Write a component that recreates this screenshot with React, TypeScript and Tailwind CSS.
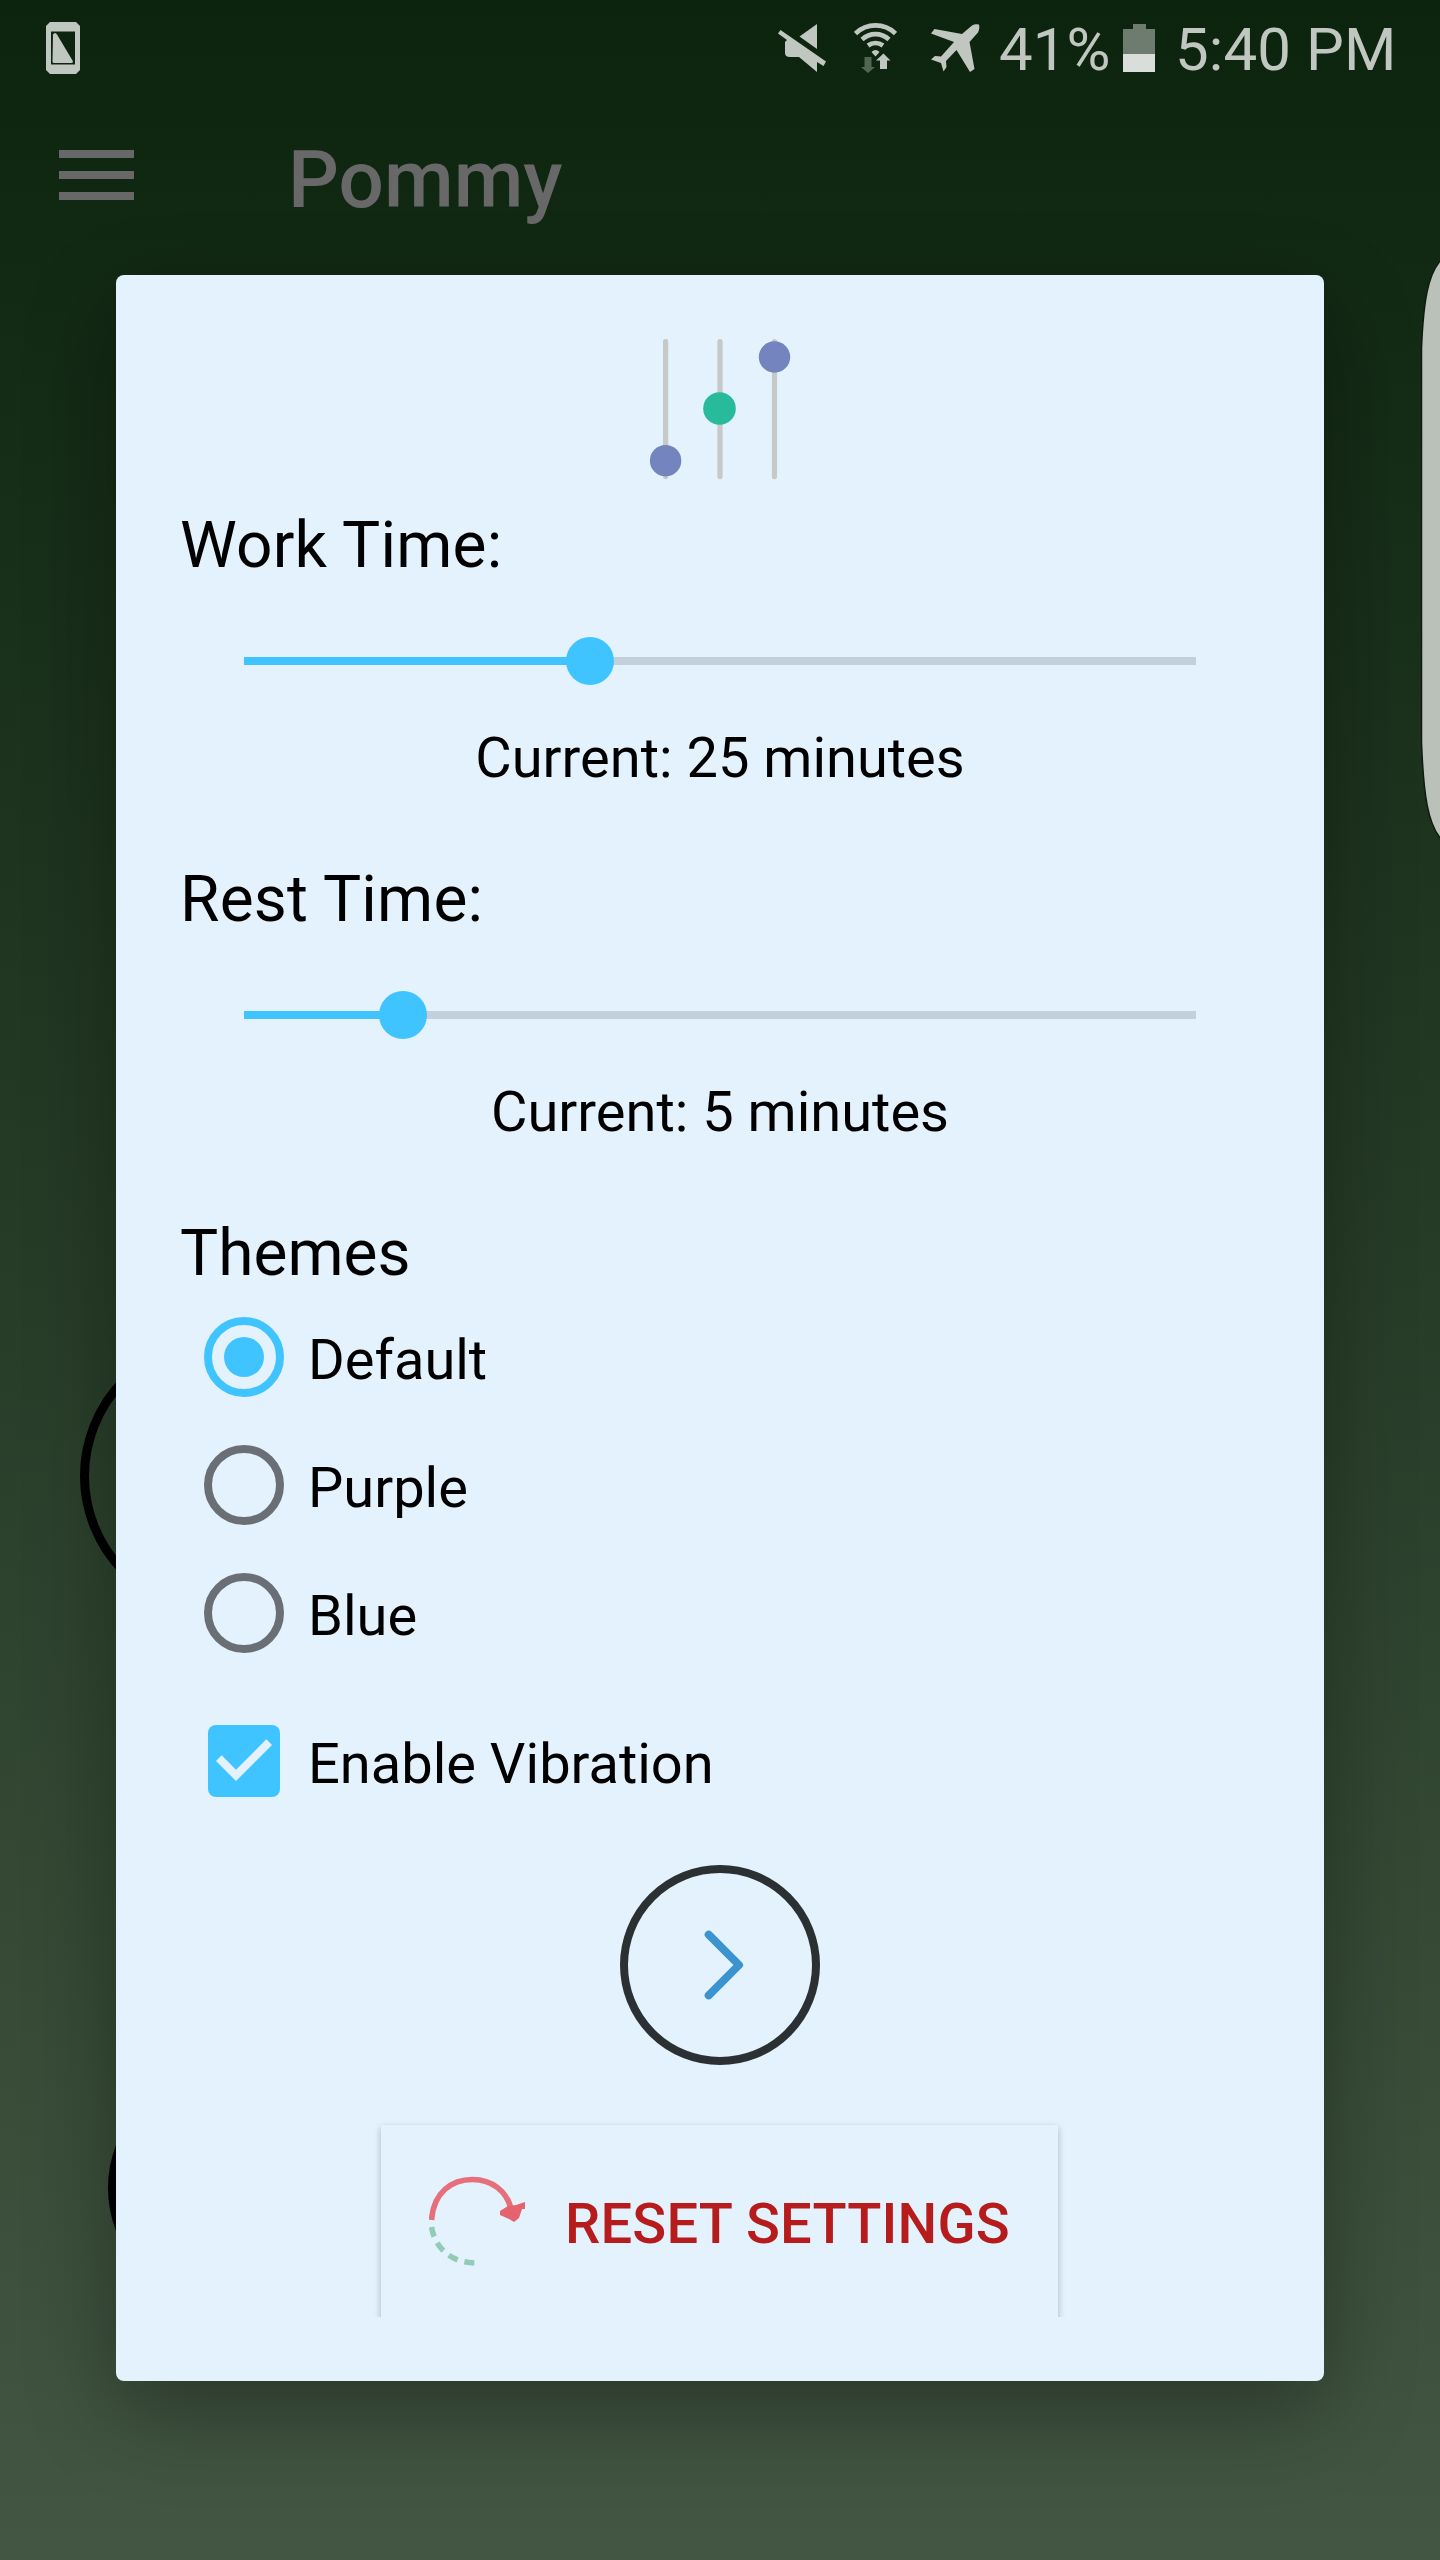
import React from "react";

const themes = ["Default", "Purple", "Blue"];

function StatusBar() {
  return (
    <div className="flex h-24 items-start text-[60px] leading-[70px] text-[#c0c7c0]">
      <svg className="ml-[46px] mt-[22px] h-[52px] w-[34px]" viewBox="0 0 34 52" fill="#c0c7c0">
        <path fillRule="evenodd" d="M4 0h26l4 4v44l-4 4H4l-4-4V4zM5 9.500v33h24v-33z" />
        <path d="M7 12.500q2-3 4 0l15.500 26q1 2.500-1 2.500H8q-1.500 0-1.500-1.500z" />
      </svg>
      <svg className="ml-[698px] mt-6 h-[48px] w-[48px]" viewBox="0 0 48 48" fill="#c0c7c0">
        <path d="M2.500 6 48 37.500l-2.500 4.500-6.500-4v10L21 33h-9q-5 0-5-4V18l2-2-9-6.500z" />
        <path d="M39 0v25L21.500 12.500z" />
      </svg>
      <svg className="ml-7 mt-[23px] h-[50px] w-[43px]" viewBox="0 0 43 50">
        <g fill="none" stroke="#c0c7c0" strokeWidth="4.700">
          <path d="M1.500 10.500Q10 2.400 21.500 2.400T41.500 10.500" />
          <path d="M8 16.500Q14 11.200 21.500 11.200T35 16.500" />
          <path d="M14 22.500Q17.500 20 21.500 20T29 22.500" />
        </g>
        <path d="M17.500 29q4-4 8 0l-4 4.500z" fill="#c0c7c0" />
        <path d="M10.500 34h7v10h3.500l-7 6-7-6h3.500z" fill="#526553" />
        <path d="M26 46V37.500h-4l7.500-7 7 7H33V46z" fill="#c0c7c0" />
      </svg>
      <svg className="ml-[34px] mt-6 h-[48px] w-[49px]" viewBox="0 0 49 48" fill="#c0c7c0">
        <path d="M3.500 5 31 10 41 1.500Q44-.5 48 .5q1 4-1 8L38.500 18 43.500 45 39 48 25.500 26 15 37l.5 6-3 4.500L10 39 0 35.500 4 32l6 .5L23 18 0 9.500z" />
      </svg>
      <span className="ml-[19px] mt-[15px] w-[124px] whitespace-nowrap">41%</span>
      <div className="mt-6 flex h-12 w-8 flex-col items-center">
        <div className="h-[5px] w-[13px] bg-[#6d7c6e]" />
        <div className="h-[25px] w-full bg-[#6d7c6e]" />
        <div className="h-[18px] w-full bg-[#d9deda]" />
      </div>
      <span className="ml-5 mt-[15px] whitespace-nowrap tracking-[0.1px]">5:40 PM</span>
    </div>
  );
}

function Toolbar() {
  return (
    <div className="flex h-[160px] items-start">
      <div className="ml-[58.500px] mt-[54px] flex w-[75.500px] flex-col gap-[13px]">
        <div className="h-2 bg-[#686868]" />
        <div className="h-2 bg-[#686868]" />
        <div className="h-2 bg-[#686868]" />
      </div>
      <h1 className="ml-[154px] mt-[36px] text-[80px] font-medium leading-[96px] text-[#686868]">Pommy</h1>
    </div>
  );
}

function TimeSetting({ label, value, percent }: { label: string; value: string; percent: number }) {
  return (
    <section className="mb-[66px]">
      <h2 className="pt-px text-[64px] leading-[84px] tracking-[0.2px]">{label}</h2>
      <div className="relative mx-16 mb-10 mt-[49px] flex h-12 items-center">
        <div className="h-2 w-full bg-[#c3cfd9]">
          <div className="h-full bg-[#40c4ff]" style={{ width: `${percent}%` }} />
        </div>
        <div
          className="absolute top-0 h-12 w-12 -translate-x-1/2 rounded-full bg-[#40c4ff]"
          style={{ left: `${percent}%` }}
        />
      </div>
      <p className="text-center text-[56px] leading-[66px]">Current: {value}</p>
    </section>
  );
}

function ThemeOption({ label, checked }: { label: string; checked: boolean }) {
  return (
    <div className="flex h-32 items-center pl-6">
      {checked ? (
        <div className="flex h-20 w-20 items-center justify-center rounded-full border-8 border-[#40c4ff]">
          <div className="h-10 w-10 rounded-full bg-[#40c4ff]" />
        </div>
      ) : (
        <div className="h-20 w-20 rounded-full border-8 border-[#696f75]" />
      )}
      <span className="ml-6 pt-[6px] text-[56px] leading-[66px]">{label}</span>
    </div>
  );
}

function SettingsDialog() {
  return (
    <div className="flex h-[2106px] w-[1208px] flex-col rounded-[8px] bg-[#e3f2fd] px-16 pt-16 text-black shadow-[0_32px_90px_rgba(0,0,0,0.33)]">
      <svg className="mb-[22px] h-[142px] w-[144px] shrink-0 self-center" viewBox="0 0 144 142">
        <g stroke="#c7c9c8" strokeWidth="5.200" strokeLinecap="round">
          <path d="M17.600 2.600v135M72 2.600v135M126.500 2.600v135" />
        </g>
        <circle cx="17.600" cy="121.700" r="15.700" fill="#7384bf" />
        <circle cx="71.500" cy="69.500" r="16.300" fill="#27ba9b" />
        <circle cx="126.500" cy="18" r="15.700" fill="#7384bf" />
      </svg>

      <TimeSetting label="Work Time:" value="25 minutes" percent={36.36} />
      <TimeSetting label="Rest Time:" value="5 minutes" percent={16.67} />

      <h2 className="-mb-[3px] pt-px text-[64px] leading-[84px]">Themes</h2>
      {themes.map((theme) => (
        <ThemeOption key={theme} label={theme} checked={theme === "Default"} />
      ))}

      <div className="mt-5 flex h-32 shrink-0 items-center pl-7">
        <div className="h-[72px] w-[72px] rounded-[8px] bg-[#40c4ff]">
          <svg className="h-full w-full" viewBox="3 3 18 18" fill="#e3f2fd">
            <path d="M10 17l-5-5 1.410-1.410L10 14.170l7.590-7.590L19 8z" />
          </svg>
        </div>
        <span className="ml-7 pt-[6px] text-[56px] leading-[66px]">Enable Vibration</span>
      </div>

      <svg className="mt-10 h-[200px] w-[200px] shrink-0 self-center" viewBox="0 0 200 200" fill="none">
        <circle cx="100" cy="100" r="96" stroke="#2b3033" strokeWidth="8" />
        <path d="M88.700 69.700 119 100 88.700 130.300" stroke="#3b94cf" strokeWidth="8" strokeLinecap="round" strokeLinejoin="round" />
      </svg>

      <div className="mt-10 flex h-[212px] shrink-0 items-start justify-center overflow-hidden pt-5">
        <button className="-ml-px flex h-[200px] w-[677px] shrink-0 items-start bg-[#e3f2fd] pl-12 shadow-[0_3px_7px_rgba(0,0,0,0.26)]">
          <svg className="mt-12 h-24 w-24 shrink-0 blur-[0.7px]" viewBox="0 0 96 96">
            <path d="M2.500 47C4.500 19 23 6.500 43.500 6.500c20 0 34 12 38.500 29" fill="none" stroke="#e66f7b" strokeWidth="5.600" />
            <path d="m71 38 8-5 8-1 9-3v7h-3l-3 9-5 4-5-3-9-4z" fill="#e5636f" />
            <path d="M2.500 54c3 18 16 35 43 36" fill="none" stroke="#93cbb6" strokeWidth="5.500" strokeDasharray="10 7" />
          </svg>
          <span className="ml-10 mt-[66px] whitespace-nowrap text-[56px] font-medium leading-[66px] tracking-[0.2px] text-[#b71c1c]">
            RESET SETTINGS
          </span>
        </button>
      </div>
    </div>
  );
}

export default function App() {
  return (
    <div className="relative h-[2560px] w-[1440px] overflow-hidden bg-linear-to-b from-[#0c240e] to-[#435643] font-['Roboto',sans-serif]">
      <div className="absolute left-20 top-[1336px] h-[280px] w-[280px] rounded-full border-[9px] border-black" />
      <div className="absolute left-[108px] top-[2068px] h-[240px] w-[240px] rounded-full border-[9px] border-black" />
      <StatusBar />
      <Toolbar />
      <div className="absolute left-[116px] top-[275px]">
        <SettingsDialog />
      </div>
      <svg className="absolute right-0 top-[256px] h-[588px] w-5" viewBox="0 0 20 588">
        <path d="M21 4C8 18 3.500 45 1.500 92V486C3.500 540 8 568 21 583" fill="#b9c1b9" stroke="#0d1c0e" strokeWidth="1.500" />
      </svg>
    </div>
  );
}
